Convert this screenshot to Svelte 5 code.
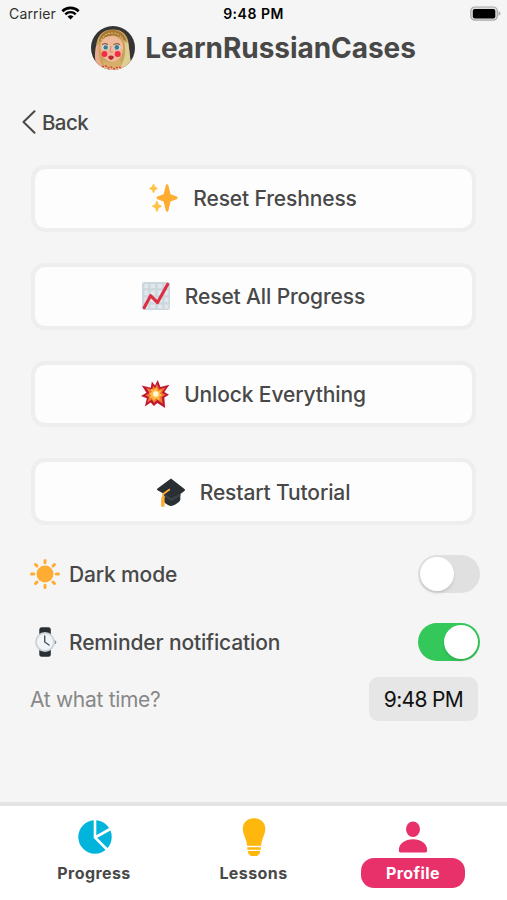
<script lang="ts">
	let darkMode = $state(false);
	let reminder = $state(true);
	let activeTab = $state('profile');
	const time = '9:48 PM';

	const actions = [
		{ icon: 'sparkles', label: 'Reset Freshness' },
		{ icon: 'chart', label: 'Reset All Progress' },
		{ icon: 'boom', label: 'Unlock Everything' },
		{ icon: 'cap', label: 'Restart Tutorial' }
	];

	const tabs = [
		{ id: 'progress', label: 'Progress' },
		{ id: 'lessons', label: 'Lessons' },
		{ id: 'profile', label: 'Profile' }
	];
</script>

<div class="screen">
	<div class="status-bar">
		<div class="carrier">
			<span>Carrier</span>
			<svg width="19" height="14" viewBox="0 0 19 14">
				<path d="M1.3 5.2a11.7 11.7 0 0 1 16.4 0" fill="none" stroke="#000" stroke-width="2.6" />
				<path d="M4.3 8.3a7.4 7.4 0 0 1 10.4 0" fill="none" stroke="#000" stroke-width="2.4" />
				<path d="M6.5 10.6a4.3 4.3 0 0 1 6 0l-3 3z" fill="#000" />
			</svg>
		</div>
		<span class="clock">{time}</span>
		<svg class="battery" width="31" height="16" viewBox="0 0 31 16">
			<rect x=".8" y="1" width="26.5" height="13.2" rx="4" fill="#ddd" stroke="#aaa" stroke-width="1.2" />
			<rect x="2.8" y="3" width="22.5" height="9.4" rx="2" fill="#000" />
			<path d="M28.5 5.2q2 1 2 2.4t-2 2.4z" fill="#aaa" />
		</svg>
	</div>

	<header>
		<svg class="logo" viewBox="0 0 44 44">
			<defs>
				<clipPath id="logo-clip"><circle cx="22" cy="22" r="22" /></clipPath>
			</defs>
			<g clip-path="url(#logo-clip)">
				<rect width="44" height="44" fill="#353334" />
				<path d="M5 44V23C5 9 12 3.5 22 3.5S38 9 38 22l2 22z" fill="#c9a35c" />
				<path d="M5 20c-2 9-1 17 2 24h7C8 35 7 28 8 18z" fill="#e9a98d" />
				<path d="M32 9c7 5 6 18 8 27l-6 8h-8c9-8 10-20 6-35z" fill="#dfce94" />
				<path d="M8 16C9 7 15 4 22 4s13 5 14 13l-5-5-9-3-9 3z" fill="#a87735" />
				<path d="M10 14l4-5 5-2 7 .5 6 5" fill="none" stroke="#d7b466" stroke-width="1.3" stroke-dasharray="2 1.2" />
				<path d="M9.5 20C10 13 15 10 21 10s11 4 11 11c0 9-5 15-11 15S9 29 9.5 20z" fill="#efb99c" />
				<path d="M11 18.5q3-2 6 0M22.5 18.5q3.5-2 6.5 0" fill="none" stroke="#704b35" stroke-width="1" />
				<ellipse cx="14.5" cy="21.5" rx="3.4" ry="2.4" fill="#d3e0df" />
				<ellipse cx="26" cy="21.5" rx="3.6" ry="2.5" fill="#d3e0df" />
				<circle cx="14.7" cy="21.4" r="2.2" fill="#377d93" />
				<circle cx="25.8" cy="21.4" r="2.3" fill="#377d93" />
				<path d="M20 20l-1 6h3" fill="none" stroke="#d18b70" stroke-width="1" />
				<circle cx="13.5" cy="28" r="2.9" fill="#f52c43" />
				<circle cx="26.7" cy="28" r="3" fill="#f52c43" />
				<path d="M17 31q3-2.8 6 0-1 3-3 3t-3-3z" fill="#b9252b" />
				<path d="M12 34q8 6 17-1l2 8-9 3-9-3z" fill="#d7af68" />
				<path d="M7 40l6 1 5 0 5 1 6-2 6 1-4 4H11z" fill="#e7bd92" />
				<path d="M11 41l4-1 2 2 3-1 3 2 4-2 4 1" fill="none" stroke="#d43c37" stroke-width="1.5" stroke-dasharray="2 1.2" />
			</g>
		</svg>
		<h1>LearnRussianCases</h1>
	</header>

	<button class="back">
		<svg width="14" height="24" viewBox="0 0 14 24">
			<path d="M12.5 1.2L1.5 12l11 10.8" fill="none" stroke="#484848" stroke-width="2" stroke-linecap="round" stroke-linejoin="round" />
		</svg>
		<span>Back</span>
	</button>

	<main>
		<div class="actions">
			{#each actions as action}
				<button class="action">
					<svg class="emoji" viewBox="0 0 36 36">
						{#if action.icon === 'sparkles'}
							<path fill="#ffac33" d="M34.350 16.170l-7.9-2.920-2.840-11.8C23.4.7 22.9.2 22 .2s-1.4.5-1.6 1.250l-2.860 11.8-7.9 2.920c-1.5.6-1.5 2.7 0 3.3l7.850 3.020 2.9 11.9c.2.8.7 1.3 1.6 1.3s1.4-.5 1.6-1.3l2.9-11.9 7.860-3.020c1.5-.6 1.5-2.7 0-3.3z" />
							<path fill="#ffc348" d="M14.280 27.620l-3.1-1.2-1.2-3.9c-.3-1-1.9-1-2.2 0l-1.2 3.9-3.1 1.2c-.9.4-.9 1.7 0 2.1l3.1 1.2 1.2 3.9c.3 1 1.9 1 2.2 0l1.2-3.9 3.1-1.2c.9-.4.9-1.7 0-2.1zM9.3 4.7L6.6 3.6 5.5.8c-.3-1-1.7-1-2 0L2.4 3.6-.2 4.7c-.8.4-.8 1.6 0 2l2.6 1.1 1.1 2.9c.3 1 1.7 1 2 0l1.1-2.9 2.7-1.1c.8-.4.8-1.6 0-2z" />
						{:else if action.icon === 'chart'}
							<rect width="36" height="36" rx="3" fill="#ccd6dd" />
							<path fill="#e1e8ed" d="M3 3h5v5H3zm8 0h6v5h-6zm9 0h6v5h-6zm9 0h5v5h-5zM3 11h5v6H3zm8 0h6v6h-6zm9 0h6v6h-6zm9 0h5v6h-5zM3 20h5v6H3zm8 0h6v6h-6zm9 0h6v6h-6zm9 0h5v6h-5zM3 29h5v5H3zm8 0h6v5h-6zm9 0h6v5h-6zm9 0h5v5h-5z" />
							<path d="M2.8 33l8.2-15.5 9 9L33 3" fill="none" stroke="#dd2e44" stroke-width="4" stroke-linecap="round" stroke-linejoin="round" />
						{:else if action.icon === 'boom'}
							<path fill="#be1931" d="M21.5 0l3.5 9 11.500-3-6.500 9.500 6 3.500-6 3.500 1 13.500-10-6.500-4.500 4-4-4.500L5 34l2.500-10.500L0 20.500l7-4L1 7l11.500 3 1.500-8 4 5z" />
							<path fill="#f4772e" d="M20.500 5l2.800 7 8-2.500-4.800 7 5 2.500-5 3 1.500 8.500-7-5-4 4-3-4.500L8 29l2.500-7-5-2 5.500-3-4-7 7 2.500 1.500-4.500 3 2z" />
							<path fill="#ffbd45" d="M20 9.500l1.800 5 5-1.500-2.800 4.500 3.500 2-4 2 .5 5-4.500-3-4 3.500-1-4.500-4 .5 2.500-3.500-3-2 4-2-1.500-4 4 1z" />
							<circle cx="19" cy="18" r="3.5" fill="#fff7dc" />
						{:else}
							<path fill="#292f33" d="M18 .5l17.3 13.8c1 .8 1 1.5 0 2.4L30 20.7V28c0 2-8 8-12 8S8 31 8 28v-8L.7 15.7c-1-.8-1-1.5 0-2.2z" />
							<path fill="#394146" d="M10 20l8 6 12-6v3l-12 7-8-6z" />
							<path d="M16.5 14.5L8 20.500v6" fill="none" stroke="#ffac33" stroke-width="2.3" />
							<path fill="#ffac33" d="M6.500 23h3.500l-.5 14H5.500c0-5-1-9 1-14z" />
						{/if}
					</svg>
					<span>{action.label}</span>
				</button>
			{/each}
		</div>

		<div class="setting">
			<svg class="setting-icon" viewBox="0 0 30 30">
				<circle cx="15" cy="15" r="8.5" fill="#ffac33" />
				<path d="M15 1.5v2.200M15 26.300v2.200M1.5 15h2.200M26.300 15h2.200M5.5 5.5l1.5 1.5M23 23l1.5 1.5M24.5 5.5L23 7M7 23l-1.5 1.5" stroke="#ffac33" stroke-width="3" stroke-linecap="round" />
			</svg>
			<span>Dark mode</span>
			<button class="toggle" class:on={darkMode} aria-label="Dark mode" onclick={() => (darkMode = !darkMode)}><i></i></button>
		</div>

		<div class="setting">
			<svg class="setting-icon" viewBox="0 0 30 30">
				<rect x="9.3" y=".3" width="11.5" height="10" rx="2.5" fill="#292f33" />
				<rect x="9.3" y="20" width="11.5" height="9.8" rx="2.5" fill="#292f33" />
				<rect x="23" y="13.5" width="3.2" height="3.5" rx="1" fill="#8899a6" />
				<circle cx="15" cy="15" r="10" fill="#ccd6dd" />
				<circle cx="15" cy="15" r="8" fill="#f1f5f7" />
				<path d="M14.7 9v6l4.3 3" fill="none" stroke="#46545e" stroke-width="1.4" stroke-linecap="round" />
			</svg>
			<span>Reminder notification</span>
			<button class="toggle" class:on={reminder} aria-label="Reminder notification" onclick={() => (reminder = !reminder)}><i></i></button>
		</div>

		{#if reminder}
			<div class="time-row">
				<span>At what time?</span>
				<button class="time">{time}</button>
			</div>
		{/if}
	</main>

	<nav>
		{#each tabs as tab}
			<button class="tab" class:active={activeTab === tab.id} onclick={() => (activeTab = tab.id)}>
				<svg width="40" height="40" viewBox="0 0 40 40">
					{#if tab.id === 'progress'}
						<circle cx="21" cy="20" r="16.7" fill="#00b4dc" />
						<path d="M21 2v18.5l13 13M21 20.5l17-9.5" fill="none" stroke="#fff" stroke-width="2.6" />
					{:else if tab.id === 'lessons'}
						<path d="M20 1.3c-6.7 0-11.2 4.5-11.2 10.5 0 5.7 4 10.5 4.3 17h14c.3-6.5 4.2-11.3 4.2-17 0-6-4.5-10.5-11.3-10.5z" fill="#ffb70d" />
						<path d="M13.3 30.2h13.5v2.5H13.3zM13.8 34h12.5l-.6 2.5-2.7 2.5h-6l-2.7-2.5z" fill="#ffb70d" />
					{:else}
						<ellipse cx="20" cy="12.3" rx="7" ry="7.7" fill="#e8316a" />
						<path d="M5.8 33.2C6 26.5 12 22.3 20 22.3s14 4.2 14.2 10.9q.1 2.2-1.8 2.2H7.6q-1.9 0-1.8-2.2z" fill="#e8316a" />
					{/if}
				</svg>
				<span>{tab.label}</span>
			</button>
		{/each}
	</nav>
</div>

<style>
	:global(body) {
		background: #f5f5f5;
	}

	.screen {
		display: flex;
		flex-direction: column;
		width: 507px;
		height: 900px;
		overflow: hidden;
		box-sizing: border-box;
		background: #f5f5f5;
		color: #484848;
		font-family: Inter, 'Liberation Sans', sans-serif;
	}

	button {
		margin: 0;
		padding: 0;
		border: 0;
		background: none;
		color: inherit;
		font: inherit;
	}

	svg {
		flex: none;
		display: block;
	}

	.status-bar {
		display: grid;
		grid-template-columns: 1fr auto 1fr;
		align-items: center;
		height: 26px;
		padding: 1px 6px 0 9px;
		box-sizing: border-box;
		color: #000;
		font-size: 14px;
	}

	.carrier {
		display: flex;
		align-items: center;
		gap: 5px;
		color: #303030;
		letter-spacing: 0.15px;
	}

	.carrier svg {
		margin-top: -2px;
	}

	.clock {
		margin-right: 3px;
		font-weight: 600;
		letter-spacing: 0.5px;
	}

	.battery {
		justify-self: end;
	}

	header {
		display: flex;
		justify-content: center;
		align-items: center;
		gap: 10px;
		height: 44px;
	}

	.logo {
		width: 44px;
		height: 44px;
	}

	h1 {
		margin: 0;
		font-size: 28px;
		font-weight: 700;
		line-height: 44px;
		letter-spacing: -0.05px;
	}

	.back {
		display: flex;
		align-items: center;
		align-self: flex-start;
		gap: 6px;
		height: 30px;
		margin: 37px 0 0 22px;
		font-size: 20.5px;
		font-weight: 500;
		letter-spacing: -0.6px;
	}

	.actions {
		display: flex;
		flex-direction: column;
		gap: 31px;
		margin: 28px 31px 30px;
	}

	.action {
		display: flex;
		justify-content: center;
		align-items: center;
		gap: 15px;
		height: 66.8px;
		box-sizing: border-box;
		border: 4px solid #eee;
		border-radius: 14px;
		background: #fdfdfd;
		background-clip: padding-box;
		font-size: 21px;
		font-weight: 500;
		letter-spacing: -0.13px;
	}

	.action span {
		padding-top: 1px;
	}

	.emoji {
		width: 28px;
		height: 28px;
		overflow: visible;
	}

	.setting {
		display: flex;
		align-items: center;
		height: 38px;
		margin: 0 27px 30px 30px;
		font-size: 21px;
		font-weight: 500;
		letter-spacing: -0.15px;
	}

	.setting-icon {
		width: 30px;
		height: 30px;
		margin-right: 9px;
	}

	.toggle {
		width: 62px;
		height: 38px;
		margin-left: auto;
		padding: 2px;
		box-sizing: border-box;
		border-radius: 19px;
		background: #e0e0e0;
	}

	.toggle i {
		display: block;
		width: 34px;
		height: 34px;
		border-radius: 50%;
		background: #fff;
		box-shadow: 0 2px 3px rgba(0, 0, 0, 0.12);
	}

	.toggle.on {
		background: #34c759;
	}

	.toggle.on i {
		margin-left: 24px;
	}

	.time-row {
		display: flex;
		justify-content: space-between;
		align-items: center;
		margin: -14px 29px 0 30px;
		color: #888;
		font-size: 21px;
		letter-spacing: -0.3px;
	}

	.time {
		width: 109px;
		height: 44px;
		border-radius: 9px;
		background: #e6e6e6;
		color: #111;
		letter-spacing: -0.65px;
	}

	nav {
		display: flex;
		justify-content: space-between;
		height: 98px;
		margin-top: auto;
		padding: 11px 42px 0;
		box-sizing: border-box;
		border-top: 4px solid #e4e4e4;
		background: #fff;
	}

	.tab {
		display: flex;
		flex-direction: column;
		align-items: center;
		width: 104px;
		height: 71px;
		font-size: 16px;
		font-weight: 700;
		letter-spacing: 0.42px;
	}

	.tab span {
		width: 104px;
		height: 30px;
		margin-top: 1px;
		border-radius: 13px;
		line-height: 31px;
		text-align: center;
	}

	.tab.active span {
		background: #e8316a;
		color: #fff;
	}
</style>
